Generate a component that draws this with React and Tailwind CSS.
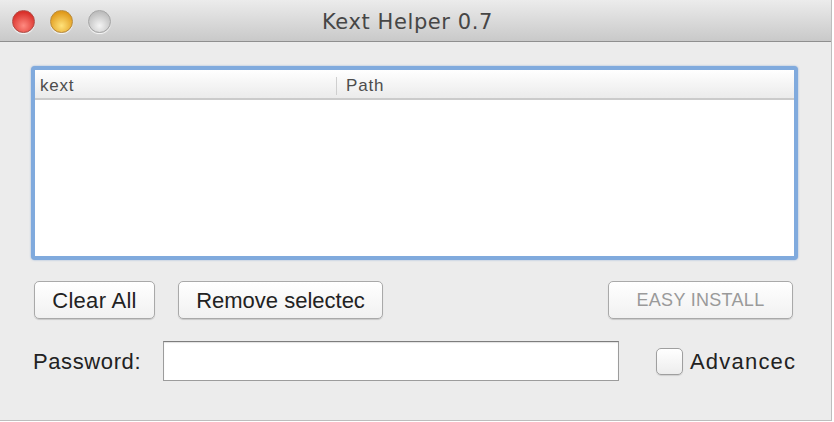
const Light = ({ from, to, ring }) => (
  <div
    className={`w-[23px] h-[23px] rounded-full border ${ring} shadow-[0_1px_1px_rgba(255,255,255,0.8)]`}
    style={{ background: `radial-gradient(circle at 50% 70%, ${from} 0%, ${to} 75%)` }}
  />
);

const Button = ({ children, className = '', disabled }) => (
  <button
    className={`h-[38px] rounded-[5px] border border-[#a9a9a9] bg-gradient-to-b from-white to-[#f1f1f1] shadow-[0_1px_1px_rgba(0,0,0,0.15)] whitespace-nowrap overflow-hidden flex items-center justify-center ${disabled ? 'text-[#9a9a9a]' : 'text-[#222]'} ${className}`}
  >
    {children}
  </button>
);

export default function App() {
  return (
    <div className="w-[834px] h-[422px] bg-white" style={{ fontFamily: '"Liberation Sans", Arial, sans-serif' }}>
      <div className="w-[832px] h-[421px] bg-[#ececec] border-r border-b border-[#bdbdbd] flex flex-col">
        {/* title bar */}
        <div className="h-[42px] shrink-0 bg-gradient-to-b from-[#ececec] to-[#c9c9c9] border-b border-[#8f8f8f] flex items-center relative">
          <div className="flex gap-[15px] pl-[12px] pt-[1px]">
            <Light from="#ff8a80" to="#d9302a" ring="border-[#b24a44]" />
            <Light from="#ffe27a" to="#e09a1b" ring="border-[#b98a3a]" />
            <Light from="#f4f4f4" to="#bdbdbd" ring="border-[#a5a5a5]" />
          </div>
          <div
            className="absolute left-0 right-[16px] top-[7px] text-center text-[21px] tracking-[0.6px] text-[#464646] pointer-events-none"
            style={{ fontFamily: '"DejaVu Sans", sans-serif' }}
          >
            Kext Helper 0.7
          </div>
        </div>

        <div className="pl-[31px] pt-[24px] pr-[36px] flex flex-col">
          {/* table */}
          <div className="w-[767px] h-[194px] rounded-[4px] border-[4px] border-[#80aadd] shadow-[0_0_2px_rgba(80,130,200,0.6)] bg-white flex flex-col overflow-hidden">
            <div className="h-[30px] pt-[3px] bg-gradient-to-b from-white to-[#ebebeb] border-b-2 border-[#cbcbcb] flex items-center text-[17px] tracking-[0.8px] text-[#4d4d4d]">
              <div className="w-[302px] pl-[5px] border-r border-[#cfcfcf] h-[18px] leading-[18px]">kext</div>
              <div className="pl-[9px] leading-[18px]">Path</div>
            </div>
          </div>

          {/* buttons */}
          <div className="flex mt-[21px] pl-[3px]">
            <Button className="w-[121px] text-[22px] tracking-[0.3px]">Clear All</Button>
            <Button className="w-[205px] ml-[23px] text-[22px]">Remove selectec</Button>
            <Button className="w-[185px] ml-auto mr-[2px] text-[18px] tracking-[0.3px]" disabled>
              EASY INSTALL
            </Button>
          </div>

          {/* password row */}
          <div className="flex items-center mt-[22px] pl-[2px]">
            <span className="text-[22px] tracking-[0.6px] text-[#222] w-[130px] shrink-0">Password:</span>
            <div className="w-[456px] h-[40px] shrink-0 bg-white border border-[#9c9c9c] border-t-[#7d7d7d] shadow-[inset_0_1px_1px_rgba(0,0,0,0.12)]" />
            <div className="ml-[37px] w-[27px] h-[27px] shrink-0 rounded-[5px] border border-[#9f9f9f] bg-gradient-to-b from-white to-[#ededed] shadow-[0_1px_1px_rgba(0,0,0,0.12)]" />
            <span className="ml-[7px] text-[22px] tracking-[1.2px] text-[#222] whitespace-nowrap">Advancec</span>
          </div>
        </div>
      </div>
    </div>
  );
}
